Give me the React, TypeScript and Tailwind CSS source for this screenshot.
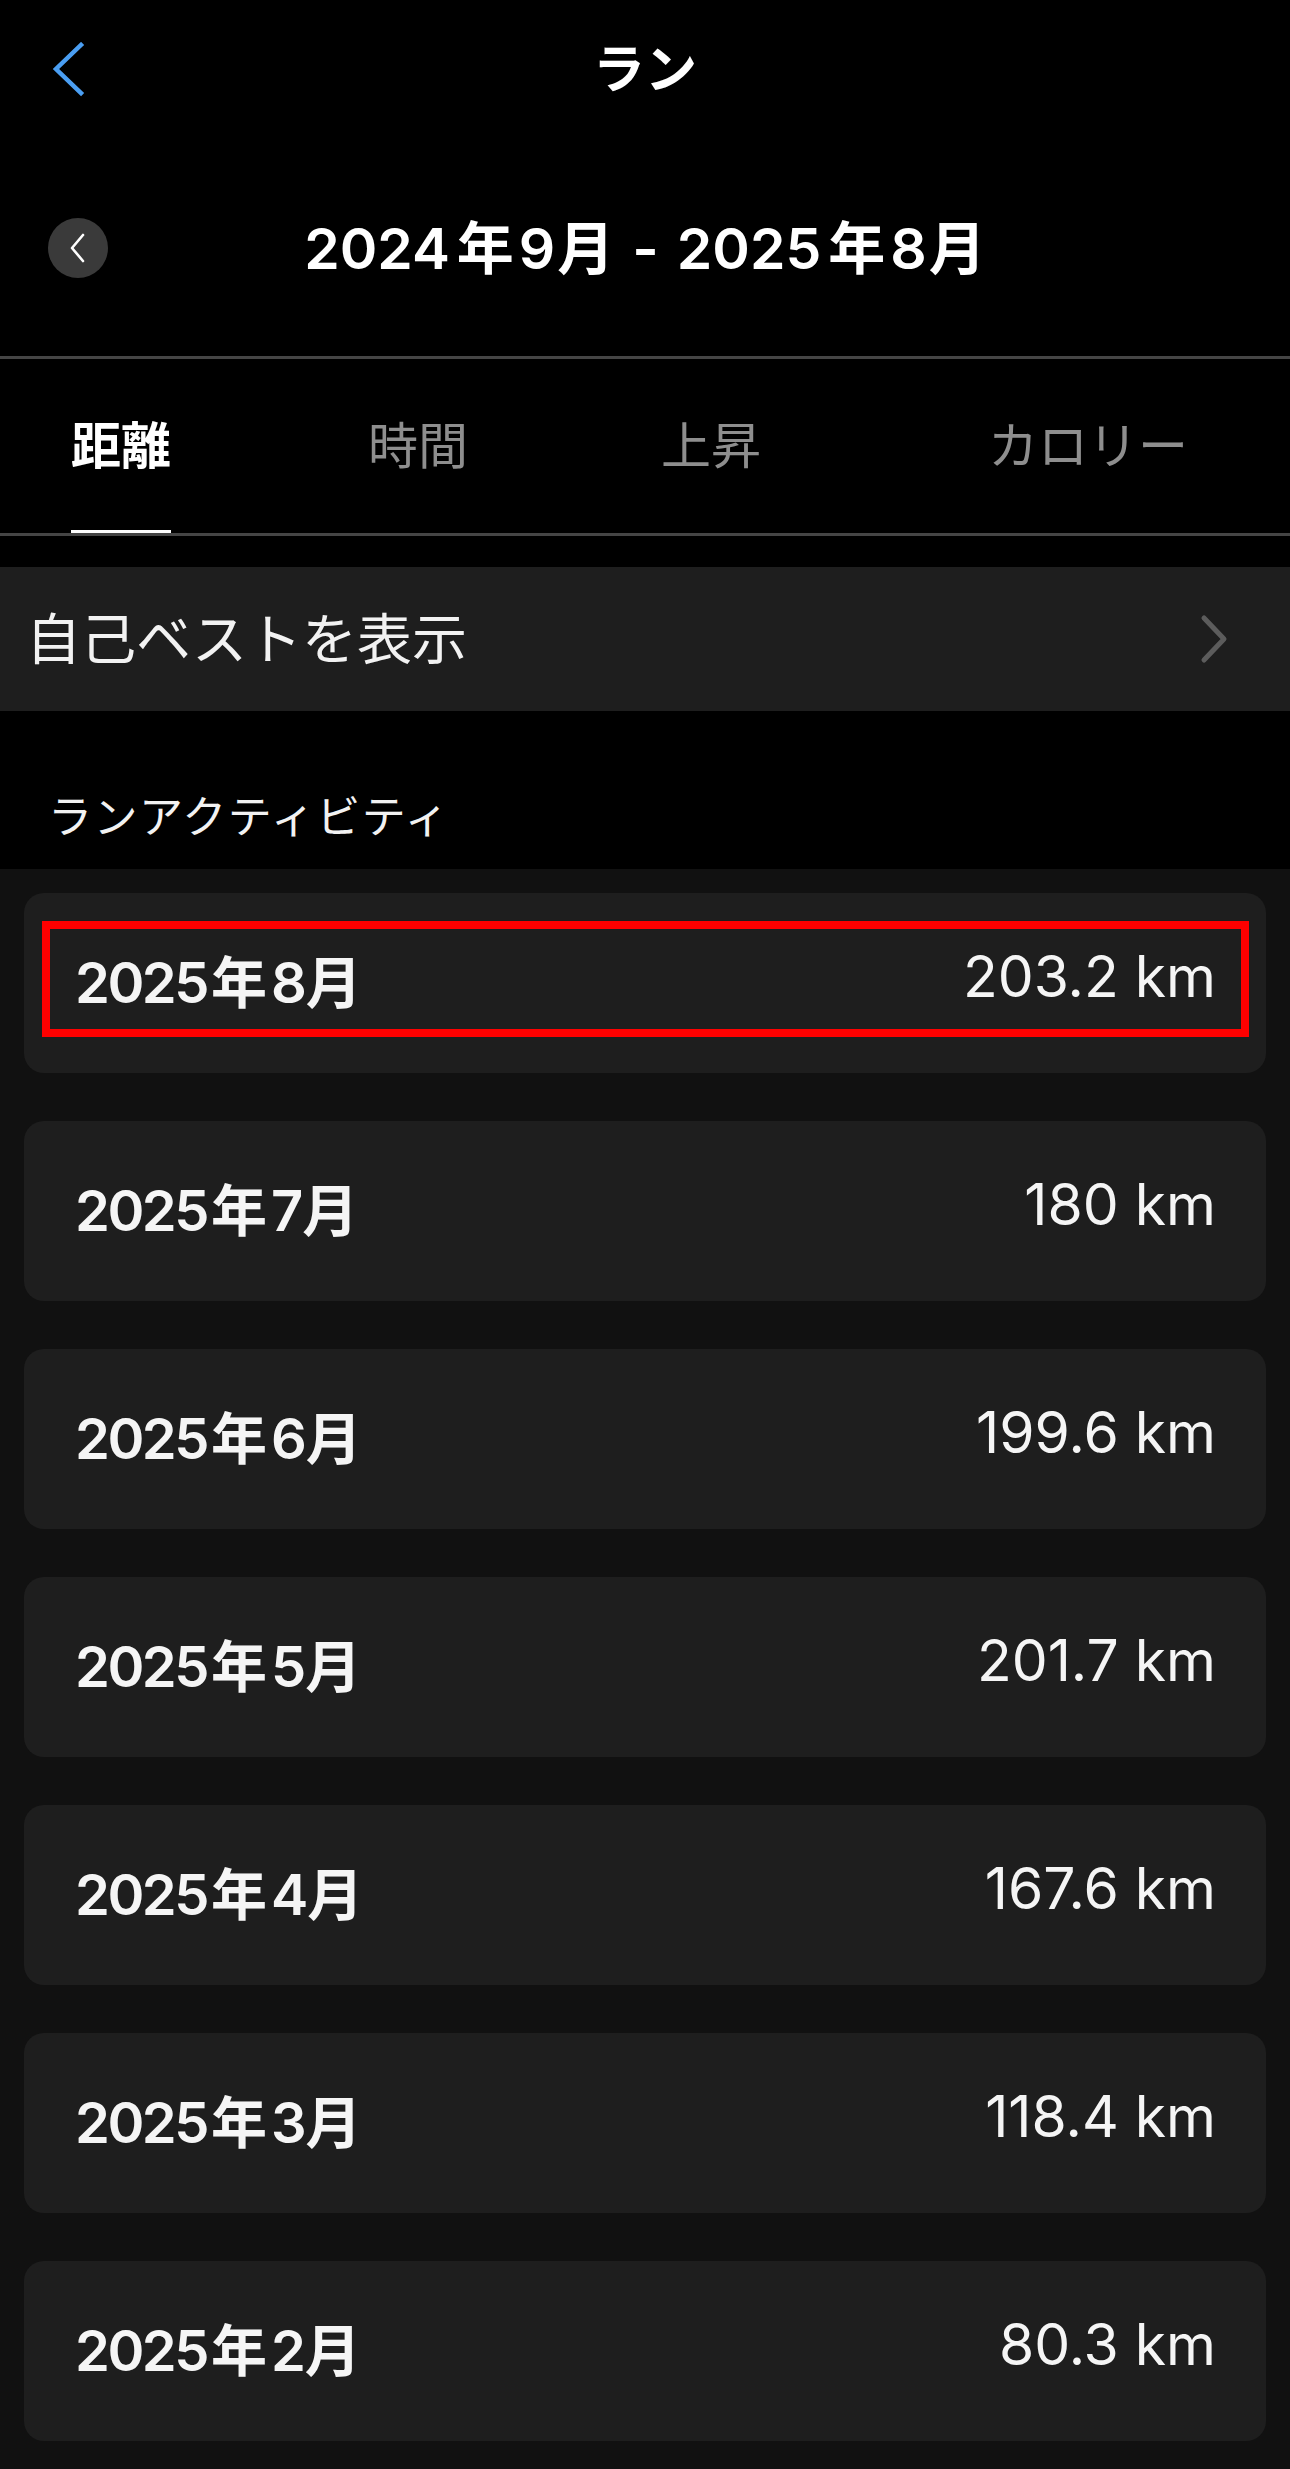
import React from "react";

const FONT = { fontFamily: 'Inter, "Noto Sans CJK JP", "Noto Sans", sans-serif' };

const months = [
  { y: "2025", mo: "8", v: "203.2 km" },
  { y: "2025", mo: "7", v: "180 km" },
  { y: "2025", mo: "6", v: "199.6 km" },
  { y: "2025", mo: "5", v: "201.7 km" },
  { y: "2025", mo: "4", v: "167.6 km" },
  { y: "2025", mo: "3", v: "118.4 km" },
  { y: "2025", mo: "2", v: "80.3 km" },
];

function CardMonth({ y, mo }: { y: string; mo: string }) {
  return (
    <span className="flex items-baseline">
      <span className="tracking-[-2.5px]">{y}</span>
      <span className="ml-[4px] mr-[4px]">年</span>
      <span>{mo}</span>
      <span className="-ml-[1px]">月</span>
    </span>
  );
}

function RangePart({ y, mo }: { y: string; mo: string }) {
  return (
    <>
      <span>{y}</span>
      <span className="ml-[7px] mr-[5px]">年</span>
      <span>{mo}</span>
      <span className="ml-[2px]">月</span>
    </>
  );
}

export default function App() {
  return (
    <div className="w-[1290px] min-h-[2469px] bg-black text-white" style={FONT}>
      {/* Nav bar */}
      <div className="grid h-[140px] grid-cols-[1fr_auto_1fr] items-center">
        <div className="pl-[51px]">
          <svg width="34" height="56" viewBox="0 0 34 56" fill="none">
            <polyline points="30,3 5,27 30,51" stroke="#4a9ef2" strokeWidth="4.5" strokeLinecap="square" strokeLinejoin="miter" />
          </svg>
        </div>
        <div className="text-[52px] font-bold leading-none">ラン</div>
        <div />
      </div>

      {/* Date range */}
      <div className="grid h-[216px] grid-cols-[1fr_auto_1fr] items-center">
        <div className="pl-[48px]">
          <div className="flex h-[60px] w-[60px] items-center justify-center rounded-full bg-[#3a3a3a]">
            <svg width="20" height="32" viewBox="0 0 20 32" fill="none">
              <polyline points="15,3 4,16 15,29" stroke="#ffffff" strokeWidth="2.6" strokeLinecap="round" strokeLinejoin="round" />
            </svg>
          </div>
        </div>
        <div className="flex items-baseline whitespace-pre text-[57px] font-semibold leading-none">
          <RangePart y="2024" mo="9" />
          <span className="mx-[18px]">-</span>
          <RangePart y="2025" mo="8" />
        </div>
        <div />
      </div>

      <div className="h-[3px] bg-[#454545]" />

      {/* Tabs */}
      <div className="flex h-[174px]">
        <div className="relative ml-[71px] flex h-full items-center text-[50px] font-bold leading-none text-white">
          距離
          <div className="absolute bottom-0 left-0 right-0 h-[3px] bg-white" />
        </div>
        <div className="ml-[197px] flex h-full items-center text-[50px] leading-none text-[#8e8e8e]">時間</div>
        <div className="ml-[193px] flex h-full items-center text-[50px] leading-none text-[#8e8e8e]">上昇</div>
        <div className="ml-[227px] flex h-full items-center text-[50px] leading-none text-[#8e8e8e]">カロリー</div>
      </div>

      <div className="h-[3px] bg-[#454545]" />

      {/* Personal best */}
      <div className="mt-[31px] flex h-[144px] items-center justify-between bg-[#1e1e1e] pl-[26px] pr-[60px]">
        <span className="text-[55px] leading-none text-[#f2f2f2]">自己ベストを表示</span>
        <svg width="32" height="50" viewBox="0 0 32 50" fill="none">
          <polyline points="6,4 26,25 6,46" stroke="#5c5c5c" strokeWidth="5" strokeLinecap="round" strokeLinejoin="round" />
        </svg>
      </div>

      {/* Section header */}
      <div className="flex h-[158px] items-start pl-[48px] pt-[84px]">
        <span className="text-[44px] leading-none tracking-[1.5px] text-[#f2f2f2]">ランアクティビティ</span>
      </div>

      {/* List */}
      <div className="flex flex-col gap-[48px] bg-[#111111] px-[24px] pb-[28px] pt-[24px]">
        {months.map((row, i) => (
          <div
            key={row.mo}
            className="relative flex h-[180px] items-center justify-between rounded-[20px] bg-[#1e1e1e] pl-[51px] pr-[50px]"
          >
            <span className="text-[56px] font-semibold leading-none text-[#f5f5f5]">
              <CardMonth y={row.y} mo={row.mo} />
            </span>
            <span className="mb-[14px] text-[57px] leading-none text-[#f5f5f5]">{row.v}</span>
            {i === 0 && (
              <div className="pointer-events-none absolute bottom-[36px] left-[18px] right-[17px] top-[28px] border-[8px] border-[#ff0000]" />
            )}
          </div>
        ))}
      </div>
    </div>
  );
}
